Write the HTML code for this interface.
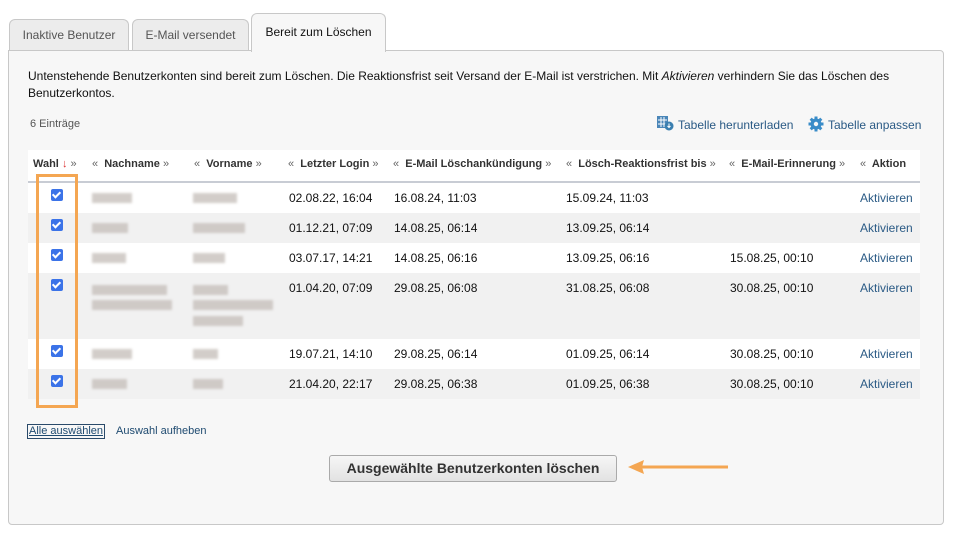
<!DOCTYPE html>
<html><head><meta charset="utf-8"><style>
body{margin:0;width:963px;height:536px;background:#fff;font-family:"Liberation Sans",Arial,sans-serif;position:relative;overflow:hidden;color:#111}
.tab{position:absolute;background:#ececec;border:1px solid #c8c8c8;border-bottom:none;border-radius:6px 6px 0 0;font-size:12px;color:#555;text-align:center}
.panel{position:absolute;left:8px;top:50px;width:934px;height:473px;background:#f7f7f7;border:1px solid #c8c8c8;border-radius:0 4px 4px 4px}
.abs{position:absolute}
.t{font-size:12px}
.row{position:absolute;left:28px;width:892px}
.cb{position:absolute;left:51px;width:12px;height:12px;background:#3b73e8;border-radius:2px}
.cb:after{content:"";position:absolute;left:3px;top:1px;width:3px;height:6px;border:solid #fff;border-width:0 2px 2px 0;transform:rotate(45deg)}
.bl{position:absolute;height:10px;background:#c4bdb8;filter:blur(1.3px);opacity:.75}
.h{position:absolute;top:158px;font-size:11px;font-weight:bold;color:#333}
.h i{font-style:normal;color:#666;font-weight:normal}
.c{position:absolute;font-size:12px;color:#111}
.a{position:absolute;left:860px;font-size:12px;color:#2a5a85}
</style></head><body>
<div class="tab" style="left:9px;top:19px;width:118px;height:31px;line-height:30px">Inaktive Benutzer</div>
<div class="tab" style="left:132px;top:19px;width:115px;height:31px;line-height:30px">E-Mail versendet</div>
<div class="panel"></div>
<div class="tab" style="left:251px;top:13px;width:133px;height:38px;line-height:36px;background:#f7f7f7;color:#111;z-index:2">Bereit zum Löschen</div>
<div class="abs t" style="left:28px;top:68px;width:900px;line-height:17px">Untenstehende Benutzerkonten sind bereit zum Löschen. Die Reaktionsfrist seit Versand der E-Mail ist verstrichen. Mit <i>Aktivieren</i> verhindern Sie das Löschen des Benutzerkontos.</div>
<div class="abs" style="left:30px;top:118px;font-size:11px;color:#555">6 Einträge</div>
<svg class="abs" style="left:657px;top:116px" width="17" height="15" viewBox="0 0 17 15"><rect x="0" y="0" width="11" height="12" fill="#4a86b8"/><path d="M1 4h9M1 8h9M4 1v10M7 1v10" stroke="#fff" stroke-width="1"/><circle cx="12" cy="10" r="4.5" fill="#3a7fb0"/><path d="M12 7.5v4M10.5 10l1.5 1.5 1.5-1.5" stroke="#fff" fill="none"/></svg>
<div class="abs" style="left:678px;top:118px;font-size:12px;color:#2a5a85">Tabelle herunterladen</div>
<svg class="abs" style="left:808px;top:116px" width="16" height="16" viewBox="0 0 16 16"><circle cx="8" cy="8" r="5.5" fill="#3a8cc8"/><g stroke="#3a8cc8" stroke-width="3"><path d="M8 0.5v15M0.5 8h15M2.7 2.7l10.6 10.6M13.3 2.7L2.7 13.3"/></g><circle cx="8" cy="8" r="2.2" fill="#f7f7f7"/></svg>
<div class="abs" style="left:828px;top:118px;font-size:12px;color:#2a5a85">Tabelle anpassen</div>
<div class="row" style="top:150px;height:33px;background:#fff;border-bottom:2px solid #c8ccd4;box-sizing:border-box"></div>
<div class="row" style="top:183px;height:30px;background:#fff"></div>
<div class="row" style="top:213px;height:30px;background:#f1f1f1"></div>
<div class="row" style="top:243px;height:30px;background:#fff"></div>
<div class="row" style="top:273px;height:66px;background:#f1f1f1"></div>
<div class="row" style="top:339px;height:30px;background:#fff"></div>
<div class="row" style="top:369px;height:30px;background:#f1f1f1"></div>
<div class="h" style="left:33px">Wahl <span style="color:#d33;font-weight:normal">↓</span> <i>»</i></div>
<div class="h" style="left:92px"><i>«</i>&nbsp; Nachname <i>»</i></div>
<div class="h" style="left:194px"><i>«</i>&nbsp; Vorname <i>»</i></div>
<div class="h" style="left:288px"><i>«</i>&nbsp; Letzter Login <i>»</i></div>
<div class="h" style="left:393px"><i>«</i>&nbsp; E-Mail Löschankündigung <i>»</i></div>
<div class="h" style="left:566px"><i>«</i>&nbsp; Lösch-Reaktionsfrist bis <i>»</i></div>
<div class="h" style="left:729px"><i>«</i>&nbsp; E-Mail-Erinnerung <i>»</i></div>
<div class="h" style="left:860px"><i>«</i>&nbsp; Aktion</div>

<div class="cb" style="top:189px"></div><div class="cb" style="top:219px"></div><div class="cb" style="top:249px"></div><div class="cb" style="top:279px"></div><div class="cb" style="top:345px"></div><div class="cb" style="top:375px"></div>

<div class="bl" style="left:92px;top:193px;width:40px"></div><div class="bl" style="left:193px;top:193px;width:44px"></div>
<div class="bl" style="left:92px;top:223px;width:36px"></div><div class="bl" style="left:193px;top:223px;width:52px"></div>
<div class="bl" style="left:92px;top:253px;width:34px"></div><div class="bl" style="left:193px;top:253px;width:32px"></div>
<div class="bl" style="left:92px;top:285px;width:75px"></div><div class="bl" style="left:92px;top:300px;width:80px"></div>
<div class="bl" style="left:193px;top:285px;width:35px"></div><div class="bl" style="left:193px;top:300px;width:80px"></div><div class="bl" style="left:193px;top:316px;width:50px"></div>
<div class="bl" style="left:92px;top:349px;width:40px"></div><div class="bl" style="left:193px;top:349px;width:25px"></div>
<div class="bl" style="left:92px;top:379px;width:35px"></div><div class="bl" style="left:193px;top:379px;width:30px"></div>

<div class="c" style="left:289px;top:191px">02.08.22, 16:04</div><div class="c" style="left:394px;top:191px">16.08.24, 11:03</div><div class="c" style="left:566px;top:191px">15.09.24, 11:03</div><div class="a" style="top:191px">Aktivieren</div>
<div class="c" style="left:289px;top:221px">01.12.21, 07:09</div><div class="c" style="left:394px;top:221px">14.08.25, 06:14</div><div class="c" style="left:566px;top:221px">13.09.25, 06:14</div><div class="a" style="top:221px">Aktivieren</div>
<div class="c" style="left:289px;top:251px">03.07.17, 14:21</div><div class="c" style="left:394px;top:251px">14.08.25, 06:16</div><div class="c" style="left:566px;top:251px">13.09.25, 06:16</div><div class="c" style="left:730px;top:251px">15.08.25, 00:10</div><div class="a" style="top:251px">Aktivieren</div>
<div class="c" style="left:289px;top:281px">01.04.20, 07:09</div><div class="c" style="left:394px;top:281px">29.08.25, 06:08</div><div class="c" style="left:566px;top:281px">31.08.25, 06:08</div><div class="c" style="left:730px;top:281px">30.08.25, 00:10</div><div class="a" style="top:281px">Aktivieren</div>
<div class="c" style="left:289px;top:347px">19.07.21, 14:10</div><div class="c" style="left:394px;top:347px">29.08.25, 06:14</div><div class="c" style="left:566px;top:347px">01.09.25, 06:14</div><div class="c" style="left:730px;top:347px">30.08.25, 00:10</div><div class="a" style="top:347px">Aktivieren</div>
<div class="c" style="left:289px;top:377px">21.04.20, 22:17</div><div class="c" style="left:394px;top:377px">29.08.25, 06:38</div><div class="c" style="left:566px;top:377px">01.09.25, 06:38</div><div class="c" style="left:730px;top:377px">30.08.25, 00:10</div><div class="a" style="top:377px">Aktivieren</div>

<div class="abs" style="left:36px;top:174px;width:36px;height:228px;border:3px solid #f4a652"></div>

<div class="abs" style="left:27px;top:424px;font-size:11px;color:#1e4a70;text-decoration:underline;border:1px solid #2a4a6a;padding:0 1px;line-height:13px">Alle auswählen</div>
<div class="abs" style="left:116px;top:425px;font-size:11px;color:#1e4a70">Auswahl aufheben</div>

<div class="abs" style="left:329px;top:455px;width:286px;height:25px;border:1px solid #aaa;border-radius:3px;background:linear-gradient(#f6f6f6,#e2e2e2);font-size:14px;font-weight:bold;color:#333;text-align:center;line-height:24px">Ausgewählte Benutzerkonten löschen</div>
<svg class="abs" style="left:624px;top:457px" width="106" height="20"><path d="M104 10H12" stroke="#f4a652" stroke-width="3"/><path d="M4 10L20 3L18 10L20 17Z" fill="#f4a652"/></svg>
</body></html>
